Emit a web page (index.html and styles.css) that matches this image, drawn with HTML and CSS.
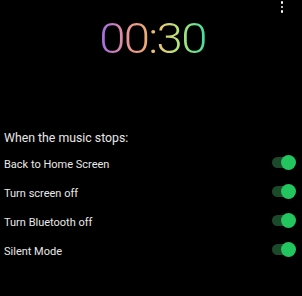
FILE: index.html
```html
<!DOCTYPE html>
<html>
<head>
<meta charset="utf-8">
<link rel="stylesheet" href="styles.css">
</head>
<body>
<div class="screen">
  <div class="menu"><span></span><span></span><span></span></div>
  <div class="timer"><span class="digits">00:30</span></div>
  <div class="settings">
    <div class="heading">When the music stops:</div>
    <div class="row"><span class="label">Back to Home Screen</span><span class="toggle"><span class="thumb"></span></span></div>
    <div class="row"><span class="label">Turn screen off</span><span class="toggle"><span class="thumb"></span></span></div>
    <div class="row"><span class="label">Turn Bluetooth off</span><span class="toggle"><span class="thumb"></span></span></div>
    <div class="row"><span class="label">Silent Mode</span><span class="toggle"><span class="thumb"></span></span></div>
  </div>
</div>
</body>
</html>
```
FILE: styles.css
```css
html, body {
  margin: 0;
  padding: 0;
  background: #000;
}
.screen {
  position: relative;
  width: 302px;
  height: 296px;
  background: #000;
  font-family: Roboto, "Noto Sans", sans-serif;
  color: #e8e8e8;
  overflow: hidden;
}
.menu {
  position: absolute;
  top: 1px;
  right: 19px;
  display: flex;
  flex-direction: column;
  gap: 2px;
}
.menu span {
  width: 2.5px;
  height: 2.5px;
  border-radius: 50%;
  background: #fff;
}
.timer {
  padding-top: 17px;
  height: 43px;
  text-align: center;
}
.digits {
  display: inline-block;
  font-size: 43px;
  line-height: 43px;
  font-weight: 300;
  letter-spacing: -1.5px;
  white-space: nowrap;
  transform: translateX(1px) scaleX(1.1);
  background: linear-gradient(90deg, #9a6ae8 0%, #e890a0 24%, #f0a874 42%, #e0d070 60%, #a8e878 78%, #40dca0 100%);
  -webkit-background-clip: text;
  background-clip: text;
  color: transparent;
}
.settings {
  padding: 71px 8px 0 4px;
}
.heading {
  font-size: 12.3px;
  line-height: 14px;
  margin-bottom: 3px;
}
.row {
  display: flex;
  align-items: center;
  justify-content: space-between;
  height: 29px;
}
.label {
  font-size: 11px;
  line-height: 13px;
  padding-top: 4px;
}
.toggle {
  position: relative;
  width: 22px;
  height: 11px;
  border-radius: 6px;
  background: #1b4a2b;
}
.thumb {
  position: absolute;
  right: -2px;
  top: -2px;
  width: 15px;
  height: 15px;
  border-radius: 50%;
  background: #22c55e;
}
```
